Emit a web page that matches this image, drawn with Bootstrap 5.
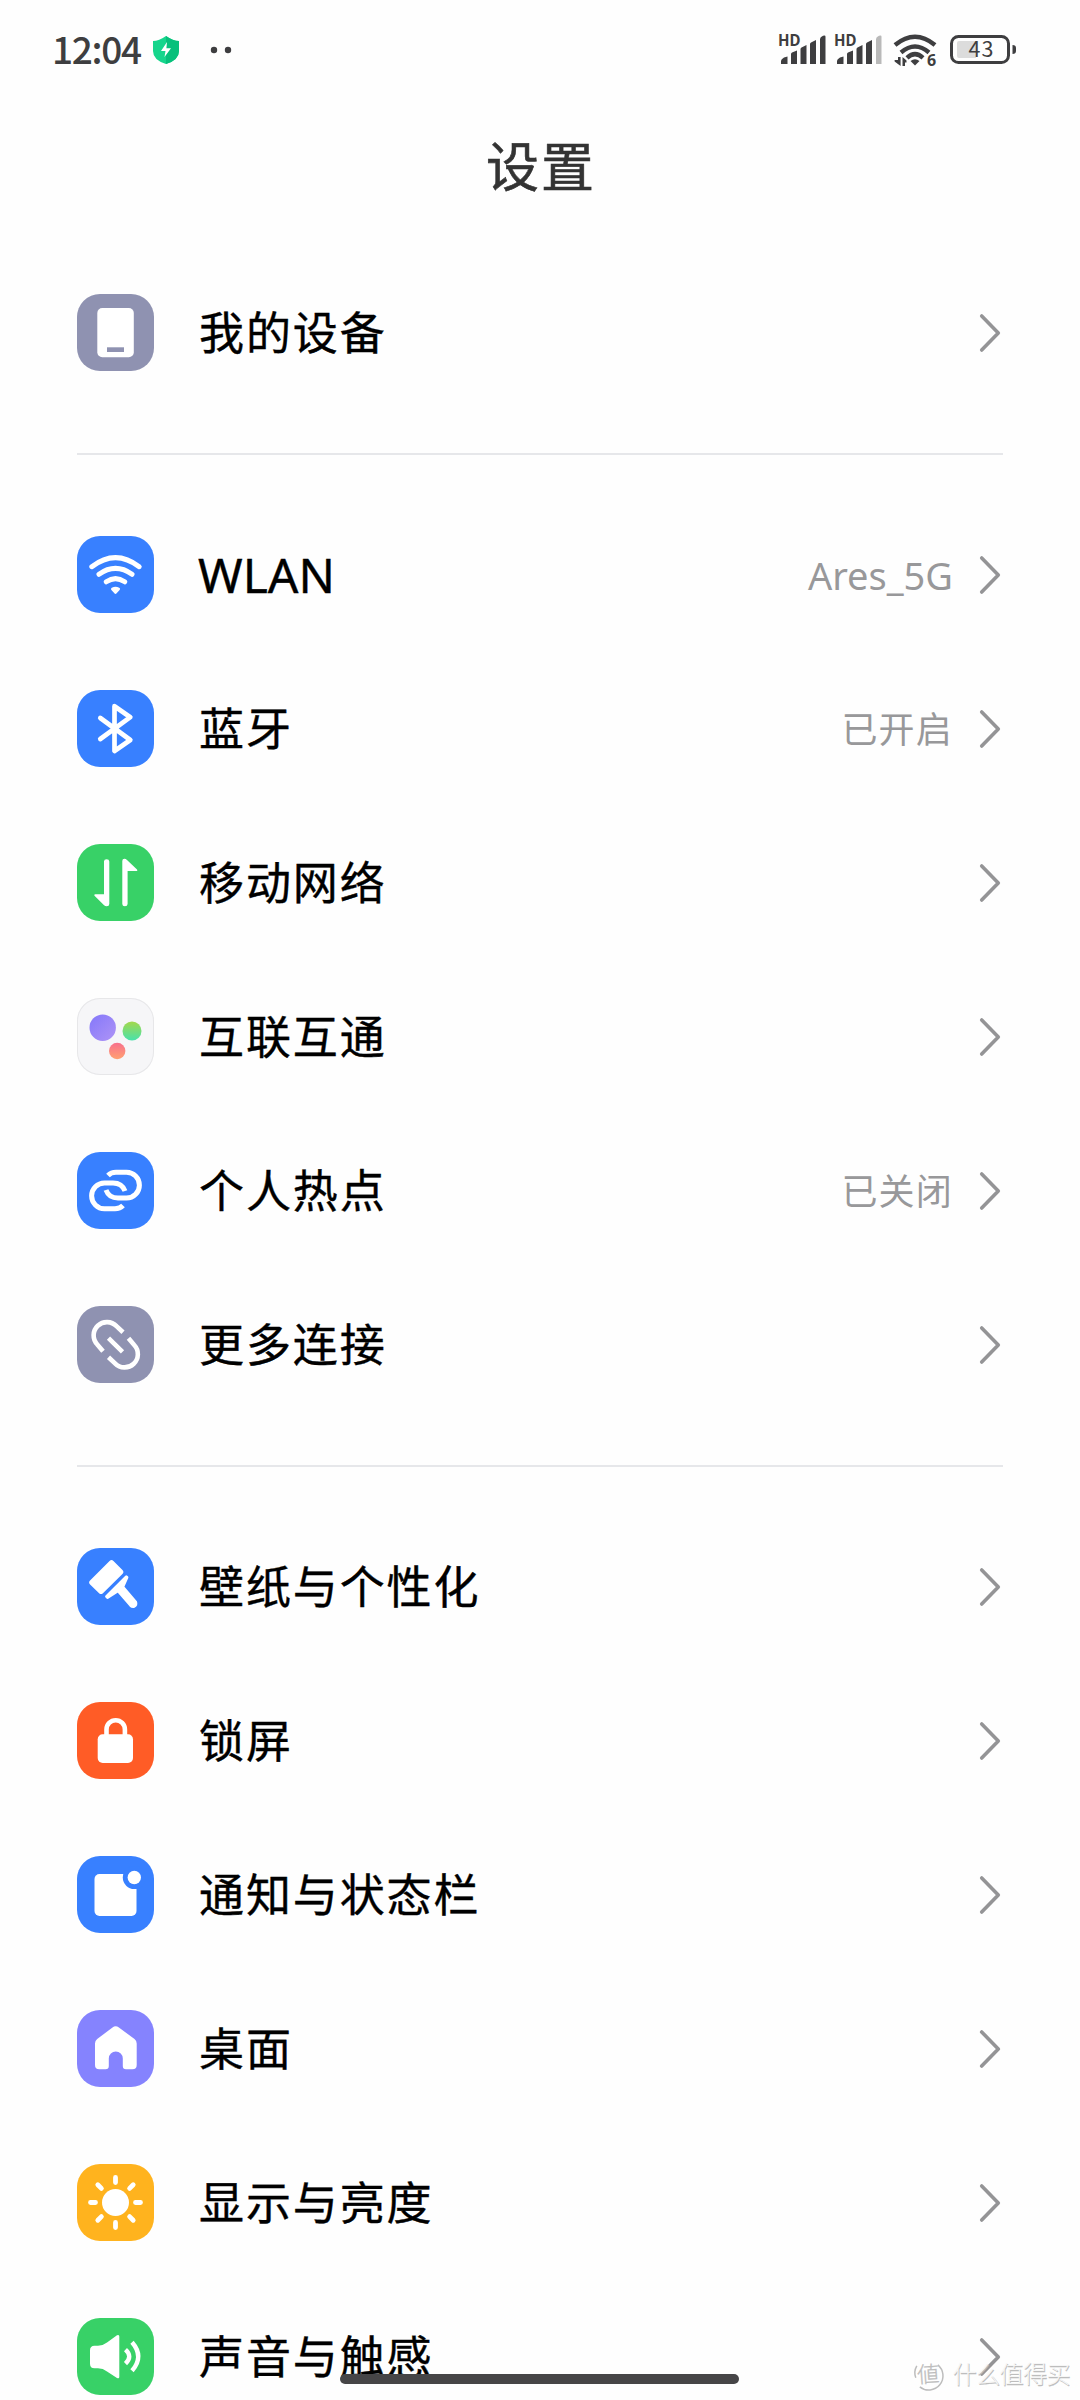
<!DOCTYPE html>
<html lang="zh-CN">
<head>
<meta charset="utf-8">
<meta name="viewport" content="width=device-width, initial-scale=1">
<title>设置</title>
<link href="https://cdn.jsdelivr.net/npm/bootstrap@5.3.0/dist/css/bootstrap.min.css" rel="stylesheet">
<style>
  html, body { height: 2400px; overflow: hidden; }
  body { background: #fefefe; color: #000; font-family: "Noto Sans CJK SC", "Noto Sans", sans-serif; }
  .screen { width: 1080px; height: 2400px; }
  .status-bar { height: 100px; padding-left: 52px; padding-right: 63px; color: #3e3e40; }
  .clock { font-size: 37px; font-weight: 500; line-height: 54px; letter-spacing: -1.3px; width: 101px; padding-bottom: 4px; }
  .page-title { font-size: 53px; letter-spacing: 2px; line-height: 80px; color: #333; padding-left: 2px; margin-top: 24px; height: 131px; font-weight: 400; -webkit-text-stroke: .6px #333; }
  .settings { padding: 0 77px; }
  .setting { height: 154px; padding: 1px 0 0; color: #000; }
  .tile { width: 77px; height: 77px; border-radius: 23px; margin-right: 45px; }
  .tile svg { display: block; width: 77px; height: 77px; }
  .label-text { font-size: 45px; letter-spacing: 1.9px; line-height: 60px; padding-bottom: 3px; -webkit-text-stroke: .4px #000; }
  .label-latin { font-family: "Noto Sans", sans-serif; font-size: 48px; letter-spacing: 0; margin-left: -1px; padding-bottom: 0; }
  .value-text { font-size: 36px; letter-spacing: 1.2px; line-height: 50px; color: #98989a; margin-right: 26px; padding-bottom: 3px; }
  .value-latin { font-family: "Noto Sans", sans-serif; font-size: 38px; letter-spacing: 0; padding-bottom: 0; }
  .chev { width: 22px; height: 40px; margin-right: 2px; }
  .divider { height: 2px; background: #e6e7ea; margin: 44px 0 42px; }
  .t-gray { background: #8f92b1; } .t-blue { background: #3880ff; } .t-green { background: #38d167; }
  .t-orange { background: #ff5c26; } .t-purple { background: #8583fe; } .t-yellow { background: #ffb31e; }
  .t-light { background: #f6f6f8; box-shadow: inset 0 0 0 1px #e7e7e9; }
  .home-bar { left: 340px; top: 2374px; width: 399px; height: 10px; border-radius: 5px; background: #464547; }
  .watermark { left: 911px; top: 2355px; }
</style>
</head>
<body>
<svg width="0" height="0" class="position-absolute" aria-hidden="true">
  <symbol id="chevron" viewBox="0 0 22 40"><path d="M2.700 3 19.300 20 2.700 37" fill="none" stroke="#949496" stroke-width="3.600" stroke-linecap="round" stroke-linejoin="round"/></symbol>
  <symbol id="bars" viewBox="0 0 46 30"><path d="M.5 29v-3q0-2 3-3.600l3.500-1V29zM10.500 29V19q0-1 1-1.500l5-2V29zM20 29V14q0-1 1-1.500l5-2.500V29zM29.500 29V9q0-1 1-1.500l5-2.500V29z"/></symbol>
</svg>
<main class="screen position-relative overflow-hidden">
  <header class="status-bar d-flex align-items-center">
    <span class="clock">12:04</span>
    <svg width="26" height="28" viewBox="0 0 26 28"><path d="M13 0q7 5 13 5v10q0 9-13 13Q0 24 0 15V5q6 0 13-5z" fill="#16d58c"/><path d="M13 0q7 5 13 5v10q0 9-13 13z" fill="#07c07b"/><path d="M14 6 8 15h4.500L11.500 21 18 12.200h-4.600z" fill="#fff"/></svg>
    <svg width="24" height="10" viewBox="0 0 24 10" style="margin-left:30px"><circle cx="5" cy="5" r="3.200" fill="#3e3e40"/><circle cx="19" cy="5" r="3.200" fill="#3e3e40"/></svg>
    <svg class="ms-auto" width="240" height="40" viewBox="777 30 240 40" fill="#3e3e40">
      <text x="778" y="46" font-size="15.500" font-weight="700" textLength="22.500" lengthAdjust="spacingAndGlyphs" font-family="Noto Sans, sans-serif">HD</text>
      <text x="834" y="46" font-size="15.500" font-weight="700" textLength="22.500" lengthAdjust="spacingAndGlyphs" font-family="Noto Sans, sans-serif">HD</text>
      <use href="#bars" x="780.500" y="35" width="46" height="30"/><path d="M820 64V39q0-2 3-3.200 2.500-1 2.500 1V64z"/>
      <use href="#bars" x="836.500" y="35" width="46" height="30"/><path d="M876 64V39q0-2 3-3.200 2.500-1 2.500 1V64z" fill="#b9b9b9"/>
      <g fill="none" stroke="#3e3e40" stroke-width="4.400"><path d="M895 45Q915 28.500 935 45"/><path d="M901 52.500Q915 40.500 929 52.500"/><path d="M907 57.800Q915 50.500 923 57.800"/></g>
      <path d="M910.500 61q4.500-3.500 9 0L915 65.500z"/>
      <path d="M898 57h2.600v9l-6-4.500v-1.500h3.400zM902.500 66v-9l4 3.500v2h-1.500V66z"/>
      <text x="927" y="65.500" font-size="16" font-weight="700" font-family="Noto Sans, sans-serif">6</text>
      <rect x="951.500" y="36.500" width="57" height="26" rx="7" fill="none" stroke="#3e3e40" stroke-width="3"/>
      <path d="M959 41h17v17h-17q-2 0-2-2V43q0-2 2-2z" fill="#dcdcdc"/>
      <path d="M1012.500 45q3.500 0 3.500 3v3q0 3-3.500 3z"/>
      <text x="968.500" y="57.300" font-size="21.500" textLength="25" font-family="Noto Sans CJK SC, sans-serif">43</text>
    </svg>
  </header>

  <h1 class="page-title text-center mb-0">设置</h1>

  <section class="settings">
    <div class="setting d-flex align-items-center">
      <span class="tile t-gray flex-shrink-0"><svg viewBox="0 0 77 77"><rect x="20.300" y="14" width="36.500" height="49.300" rx="5" fill="#fff"/><path d="M30 53.300h17V58H30z" fill="#8f92b1"/></svg></span>
      <span class="label-text flex-grow-1">我的设备</span><svg class="chev"><use href="#chevron"/></svg>
    </div>
    <div class="divider"></div>
    <div class="setting d-flex align-items-center">
      <span class="tile t-blue flex-shrink-0"><svg viewBox="0 0 77 77" fill="none" stroke="#fff" stroke-width="5" stroke-linecap="round"><path d="M14.800 30.700Q38.500 12.500 62.200 30.700M22 38.300Q38.500 26.500 55 38.300M29.300 45.800Q38.500 39.500 47.700 45.800"/><path d="M35.500 53q3-1.600 6 0L38.500 56.300z" fill="#fff" stroke-width="3" stroke-linejoin="round"/></svg></span>
      <span class="label-text label-latin flex-grow-1">WLAN</span><span class="value-text value-latin">Ares_5G</span><svg class="chev"><use href="#chevron"/></svg>
    </div>
    <div class="setting d-flex align-items-center">
      <span class="tile t-blue flex-shrink-0"><svg viewBox="0 0 77 77" fill="none" stroke="#fff" stroke-width="4.700" stroke-linecap="round" stroke-linejoin="round"><path d="M23.300 28 53.300 50 37.500 61V16.200L53.300 27.200 23.300 49"/></svg></span>
      <span class="label-text flex-grow-1">蓝牙</span><span class="value-text">已开启</span><svg class="chev"><use href="#chevron"/></svg>
    </div>
    <div class="setting d-flex align-items-center">
      <span class="tile t-green flex-shrink-0"><svg viewBox="0 0 77 77" fill="#fff"><path d="M27 17.500q0-2.200 2.600-2.200t2.700 2.200V60q0 2.300-2.600 2.300-1.500 0-2.600-1L17.500 51.800q-1-1.500.8-1.500H27zM45.300 60q0 2.200 2.600 2.200t2.700-2.200V27H59q2 0 1-1.500L50 16q-1.200-1.200-2.600-1.200-2.100 0-2.100 2.300z"/></svg></span>
      <span class="label-text flex-grow-1">移动网络</span><svg class="chev"><use href="#chevron"/></svg>
    </div>
    <div class="setting d-flex align-items-center">
      <span class="tile t-light flex-shrink-0"><svg viewBox="0 0 77 77">
        <defs>
          <linearGradient id="gp" x2="1" y2="1"><stop stop-color="#8478fa"/><stop offset="1" stop-color="#ae93f6"/></linearGradient>
          <linearGradient id="gg" x2="0" y2="1"><stop stop-color="#a4d84c"/><stop offset="1" stop-color="#48e2ab"/></linearGradient>
          <linearGradient id="gr" x2="0" y2="1"><stop stop-color="#f8708c"/><stop offset="1" stop-color="#ffa171"/></linearGradient>
        </defs>
        <circle cx="25.700" cy="29.700" r="13.200" fill="url(#gp)"/><circle cx="55" cy="33" r="9.500" fill="url(#gg)"/><circle cx="40.200" cy="53" r="8.200" fill="url(#gr)"/></svg></span>
      <span class="label-text flex-grow-1">互联互通</span><svg class="chev"><use href="#chevron"/></svg>
    </div>
    <div class="setting d-flex align-items-center">
      <span class="tile t-blue flex-shrink-0"><svg viewBox="0 0 77 77" fill="none" stroke="#fff" stroke-width="5"><path id="hs" d="M31 23.500Q34 20.300 39 20.300H49.500A12.900 12.900 0 0 1 49.500 46.100H41Q32 46.100 29 38"/><use href="#hs" transform="rotate(180 38.500 38.500)"/></svg></span>
      <span class="label-text flex-grow-1">个人热点</span><span class="value-text">已关闭</span><svg class="chev"><use href="#chevron"/></svg>
    </div>
    <div class="setting d-flex align-items-center">
      <span class="tile t-gray flex-shrink-0"><svg viewBox="0 0 77 77" fill="none" stroke="#fff" stroke-width="4.600"><path d="M26 45.300 20.300 38.500A13.100 13.100 0 0 1 39.500 20.200L46 26.300M51.500 32.200 57.200 39A13.100 13.100 0 0 1 38 57.300L31.500 51.200M31.500 32.200 45.500 45.800"/></svg></span>
      <span class="label-text flex-grow-1">更多连接</span><svg class="chev"><use href="#chevron"/></svg>
    </div>
    <div class="divider"></div>
    <div class="setting d-flex align-items-center">
      <span class="tile t-blue flex-shrink-0"><svg viewBox="0 0 77 77" fill="#fff" stroke="#fff" stroke-linejoin="round"><path d="M34.500 15 43.500 24 24 43.200 15 34.500z" stroke-width="5.500"/><path d="M49.300 28.800 50 29.400 45.800 39 58.600 53.800Q60 57 56.500 58.700 54.800 58.800 53.800 57.700L41 42.900 30.500 49.500 29.500 48.500z" stroke-width="2.800"/></svg></span>
      <span class="label-text flex-grow-1">壁纸与个性化</span><svg class="chev"><use href="#chevron"/></svg>
    </div>
    <div class="setting d-flex align-items-center">
      <span class="tile t-orange flex-shrink-0"><svg viewBox="0 0 77 77"><rect x="20.700" y="32.300" width="35.300" height="28.700" rx="5" fill="#fff"/><path d="M29.500 35V27.500a9.200 9.200 0 0 1 18.400 0V35" fill="none" stroke="#fff" stroke-width="4.600"/></svg></span>
      <span class="label-text flex-grow-1">锁屏</span><svg class="chev"><use href="#chevron"/></svg>
    </div>
    <div class="setting d-flex align-items-center">
      <span class="tile t-blue flex-shrink-0"><svg viewBox="0 0 77 77"><rect x="17.500" y="18" width="42" height="42" rx="5" fill="#fff"/><circle cx="57.300" cy="21.500" r="11.500" fill="#3880ff"/><circle cx="57.300" cy="21.500" r="6.700" fill="#fff"/></svg></span>
      <span class="label-text flex-grow-1">通知与状态栏</span><svg class="chev"><use href="#chevron"/></svg>
    </div>
    <div class="setting d-flex align-items-center">
      <span class="tile t-purple flex-shrink-0"><svg viewBox="0 0 77 77" fill="#fff"><path d="M35.500 17.500q3-2.400 6.400 0L57.500 29q2.200 1.700 2.200 4.500V55q0 4.300-4.300 4.300H49q-3.200 0-3.200-3.200V48.500a7 7 0 0 0-14 0v7.600q0 3.200-3.200 3.200h-6.300Q18 59.300 18 55V33.500q0-2.800 2.200-4.500z"/></svg></span>
      <span class="label-text flex-grow-1">桌面</span><svg class="chev"><use href="#chevron"/></svg>
    </div>
    <div class="setting d-flex align-items-center">
      <span class="tile t-yellow flex-shrink-0"><svg viewBox="0 0 77 77"><circle cx="38.500" cy="38.500" r="13.500" fill="#fff"/><path d="M38.500 13.500v5M38.500 58.500v5M13.500 38.500h5M58.500 38.500h5M20.800 20.800l3.600 3.600M52.600 52.600l3.600 3.600M20.800 56.200l3.600-3.600M52.600 24.400l3.600-3.600" fill="none" stroke="#fff" stroke-width="4.800" stroke-linecap="round"/></svg></span>
      <span class="label-text flex-grow-1">显示与亮度</span><svg class="chev"><use href="#chevron"/></svg>
    </div>
    <div class="setting d-flex align-items-center">
      <span class="tile t-green flex-shrink-0"><svg viewBox="0 0 77 77" fill="#fff"><path d="M17.500 27.700H21Q26 27.700 30 24.500L40 17.200q2.300-1 2.300 1.200V58.800q0 2.200-2.300 1.200L30 53.500Q26 50.300 21 50.300h-3.500q-4.500 0-4.500-4.500V32.200q0-4.500 4.500-4.500z"/><path d="M48.500 31.700Q56 38.500 48.500 45.700M55 24.200Q67.500 38.500 55 52.800" fill="none" stroke="#fff" stroke-width="4.400"/></svg></span>
      <span class="label-text flex-grow-1">声音与触感</span><svg class="chev"><use href="#chevron"/></svg>
    </div>
  </section>

  <div class="home-bar position-absolute"></div>
  <svg class="watermark position-absolute" width="165" height="40" viewBox="911 2356 165 40" font-family="Noto Sans CJK SC, sans-serif" font-weight="300">
    <g fill="#bdbdbd" stroke="#bdbdbd" stroke-width=".3" transform="translate(.8 .8)"><path d="M916 2366a14 14 0 0 0-1 12M919 2387a14 14 0 0 0 18-22" fill="none" stroke-width="1.500"/><text x="916.500" y="2382.500" font-size="22" transform="rotate(-4 928 2375)">値</text><text x="952.500" y="2384" font-size="24" textLength="118">什么值得买</text></g>
    <g fill="#f6f6f6"><text x="952.500" y="2384" font-size="24" textLength="118">什么值得买</text></g>
  </svg>
</main>
<script src="https://cdn.jsdelivr.net/npm/bootstrap@5.3.0/dist/js/bootstrap.bundle.min.js"></script>
</body>
</html>
